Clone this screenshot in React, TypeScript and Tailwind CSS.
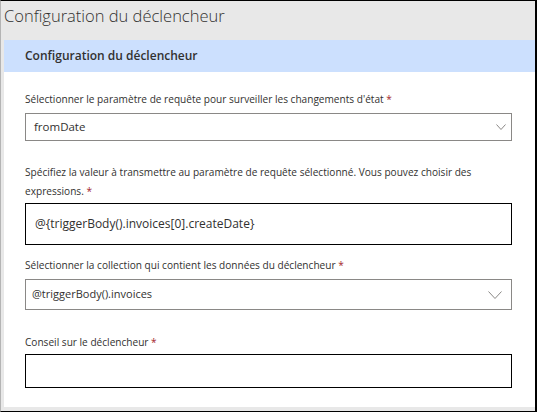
import React from "react";

const font = { fontFamily: '"Open Sans", "Noto Sans", sans-serif' };

function Chevron({ w, h }: { w: number; h: number }) {
  return (
    <svg width={w} height={h} viewBox={`0 0 ${w} ${h}`} fill="none">
      <polyline
        points={`0.5,0.5 ${w / 2},${h - 0.5} ${w - 0.5},0.5`}
        stroke="#8a8886"
        strokeWidth="1"
      />
    </svg>
  );
}

function Required() {
  return <span className="text-[#a4262c]">&nbsp;*</span>;
}

function Label({ children }: { children: React.ReactNode }) {
  return (
    <div className="text-[10.1px] leading-[19px] text-[#323130]">
      {children}
      <Required />
    </div>
  );
}

export default function App() {
  return (
    <div
      style={font}
      className="w-[537px] h-[412px] bg-[#e8e8e8] border-t border-b border-t-black border-b-black border-l border-l-[#b4b4b4] border-r-2 border-r-black flex flex-col pl-[3px] pb-[4px] overflow-hidden"
    >
      <div className="h-[39px] shrink-0 pt-[3px] text-[16.5px] font-light leading-[24px] text-[#323130]">
        Configuration du déclencheur
      </div>
      <div className="flex-1 flex flex-col bg-white">
        <div className="h-[32px] shrink-0 bg-[#cce0fe] flex items-center pl-[21px] text-[12px] font-semibold text-[#323130]">
          Configuration du déclencheur
        </div>
        <div className="flex flex-col pt-[18px] pl-[21px] pr-[23px]">
          <Label>Sélectionner le paramètre de requête pour surveiller les changements d'état</Label>
          <div className="mt-[4px] h-[28px] border border-[#8a8886] flex items-center justify-between pl-[8px] pr-[5px]">
            <span className="text-[11.5px] text-[#323130]">fromDate</span>
            <Chevron w={10} h={6} />
          </div>

          <div className="mt-[22px] text-[10.1px] leading-[19px] text-[#323130]">
            <div className="whitespace-nowrap">
              Spécifiez la valeur à transmettre au paramètre de requête sélectionné. Vous pouvez choisir des
            </div>
            <div>
              expressions.
              <Required />
            </div>
          </div>
          <div className="mt-[2px] h-[42px] border border-black flex items-center pl-[9px]">
            <span className="text-[12px] text-[#323130]">@{"{"}triggerBody().invoices[0].createDate{"}"}</span>
          </div>

          <div className="mt-[11px]">
            <Label>Sélectionner la collection qui contient les données du déclencheur</Label>
          </div>
          <div className="mt-[4px] h-[31px] border border-[#8a8886] flex items-center justify-between pl-[6px] pr-[9px]">
            <span className="text-[11px] text-[#323130]">@triggerBody().invoices</span>
            <Chevron w={14} h={8} />
          </div>

          <div className="mt-[23px]">
            <Label>Conseil sur le déclencheur</Label>
          </div>
          <div className="mt-[2px] h-[34px] border border-black" />
        </div>
      </div>
    </div>
  );
}
